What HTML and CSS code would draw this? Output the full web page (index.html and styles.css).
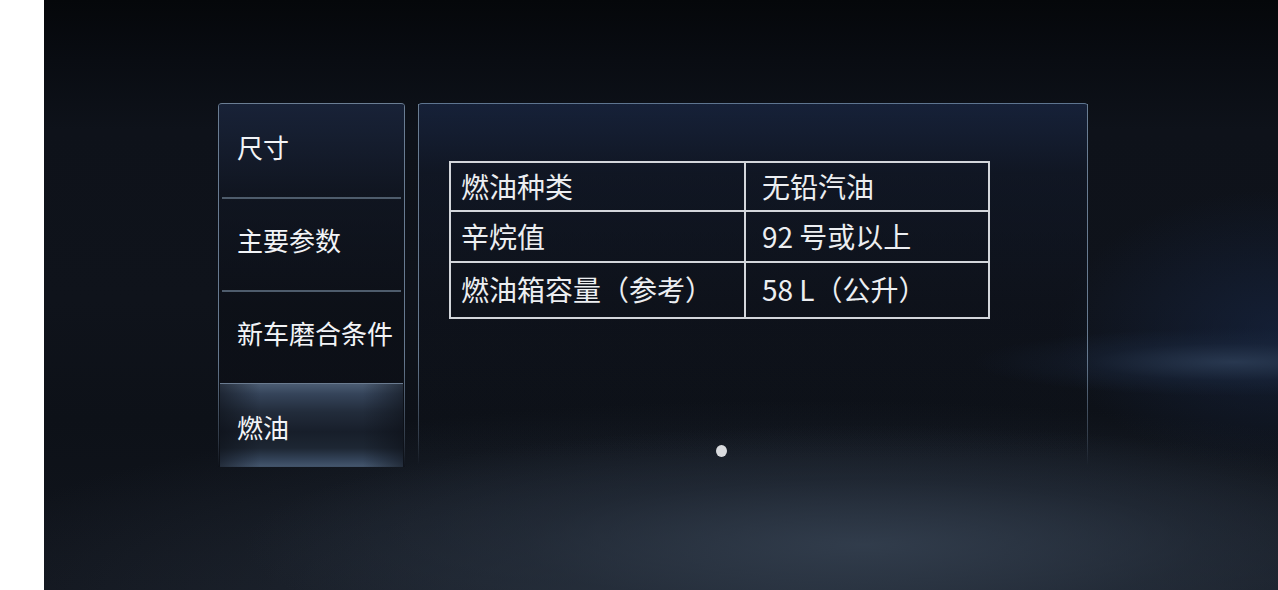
FILE: index.html
```
<!DOCTYPE html>
<html lang="zh-CN">
<head>
<meta charset="utf-8">
<link rel="stylesheet" href="styles.css">
</head>
<body>
<div class="screen">
  <nav class="menu">
    <div class="item">尺寸</div>
    <div class="item">主要参数</div>
    <div class="item">新车磨合条件</div>
    <div class="item active">燃油</div>
  </nav>
  <section class="content">
    <table class="spec">
      <tr class="r1"><td class="k">燃油种类</td><td class="v">无铅汽油</td></tr>
      <tr class="r2"><td class="k">辛烷值</td><td class="v">92 号或以上</td></tr>
      <tr class="r3"><td class="k">燃油箱容量（参考）</td><td class="v">58 L（公升）</td></tr>
    </table>
    <div class="pager"><span class="dot"></span></div>
  </section>
</div>
</body>
</html>
```
FILE: styles.css
```
html, body {
  margin: 0;
  padding: 0;
  background: #ffffff;
  width: 1278px;
  height: 590px;
  overflow: hidden;
}
body {
  font-family: "Noto Sans CJK SC", "Noto Sans", sans-serif;
}
.screen {
  margin-left: 44px;
  width: 1234px;
  height: 590px;
  box-sizing: border-box;
  padding: 103px 0 0 174px;
  display: flex;
  align-items: flex-start;
  gap: 13px;
  background:
    radial-gradient(ellipse 260px 34px at 1190px 362px, rgba(48,66,92,0.75), rgba(30,45,70,0.35) 55%, transparent 100%),
    radial-gradient(ellipse 220px 140px at 1234px 330px, rgba(22,36,64,0.7), transparent 100%),
    radial-gradient(ellipse 620px 120px at 820px 545px, rgba(52,64,80,0.85), rgba(40,50,64,0.45) 55%, transparent 100%),
    radial-gradient(ellipse 900px 200px at 760px 600px, rgba(44,54,68,0.8), transparent 100%),
    linear-gradient(to bottom, #05070a 0px, #090c12 60px, #0e121a 130px, #0f131b 300px, #0d1118 420px, #11151d 590px);
}
.menu {
  position: relative;
  width: 187px;
  height: 364px;
  box-sizing: border-box;
  padding-top: 2px;
  border-top: 1px solid #6b7e94;
  border-radius: 4px 4px 0 0;
  overflow: hidden;
  background: linear-gradient(to bottom, rgba(28,40,66,0.75) 0px, rgba(17,23,36,0.6) 90px, rgba(11,14,21,0.5) 200px, rgba(11,14,21,0.4) 364px);
}
.menu::before, .menu::after,
.content::before, .content::after {
  content: "";
  position: absolute;
  top: 0;
  bottom: 0;
  width: 1px;
  background: linear-gradient(to bottom, #6a7d93 0%, #66798f 70%, rgba(102,121,143,0.4) 92%, transparent 100%);
}
.menu::before, .content::before { left: 0; }
.menu::after, .content::after { right: 0; }
.item {
  height: 93px;
  box-sizing: border-box;
  display: flex;
  align-items: center;
  margin: 0 4px;
  padding: 0 0 10px 15px;
  font-size: 26px;
  color: #f2f4f7;
  border-bottom: 2px solid #4e5c6c;
}
.item.active {
  margin: -2px 2px 0;
  padding: 0 0 7px 17px;
  border-bottom: none;
  border-top: 1px solid #6a7b90;
  background:
    linear-gradient(to right, rgba(11,14,21,0.55) 0%, transparent 22%, transparent 78%, rgba(11,14,21,0.55) 100%),
    linear-gradient(to bottom, #4b5c72 0px, #35445a 10px, #222c3b 28px, #171e2a 48px, #1d2633 64px, #34445a 76px, #43556c 82px, #0d1118 92px);
}
.content {
  position: relative;
  width: 670px;
  height: 362px;
  box-sizing: border-box;
  border-top: 1px solid #5e7590;
  border-radius: 4px 4px 0 0;
  padding: 57px 0 0 31px;
  display: flex;
  flex-direction: column;
  background: linear-gradient(to bottom, rgba(26,40,70,0.7) 0px, rgba(18,26,44,0.5) 70px, rgba(12,16,26,0.3) 200px, transparent 362px);
}
.spec {
  border-collapse: collapse;
  width: 541px;
  color: #eceef1;
  font-size: 28px;
}
.spec td {
  border: 2px solid #d3d6db;
  padding: 0 0 2px 10px;
  line-height: 1;
  vertical-align: middle;
}
.spec td.k { width: 283px; }
.spec td.v { padding-left: 16px; }
.spec .r1 td { height: 45px; }
.spec .r2 td { height: 47px; }
.spec .r3 td { height: 52px; }
.pager {
  margin-top: 126px;
  display: flex;
  padding-left: 267px;
}
.dot {
  width: 11px;
  height: 12px;
  border-radius: 50%;
  background: #d9dbde;
}
```
